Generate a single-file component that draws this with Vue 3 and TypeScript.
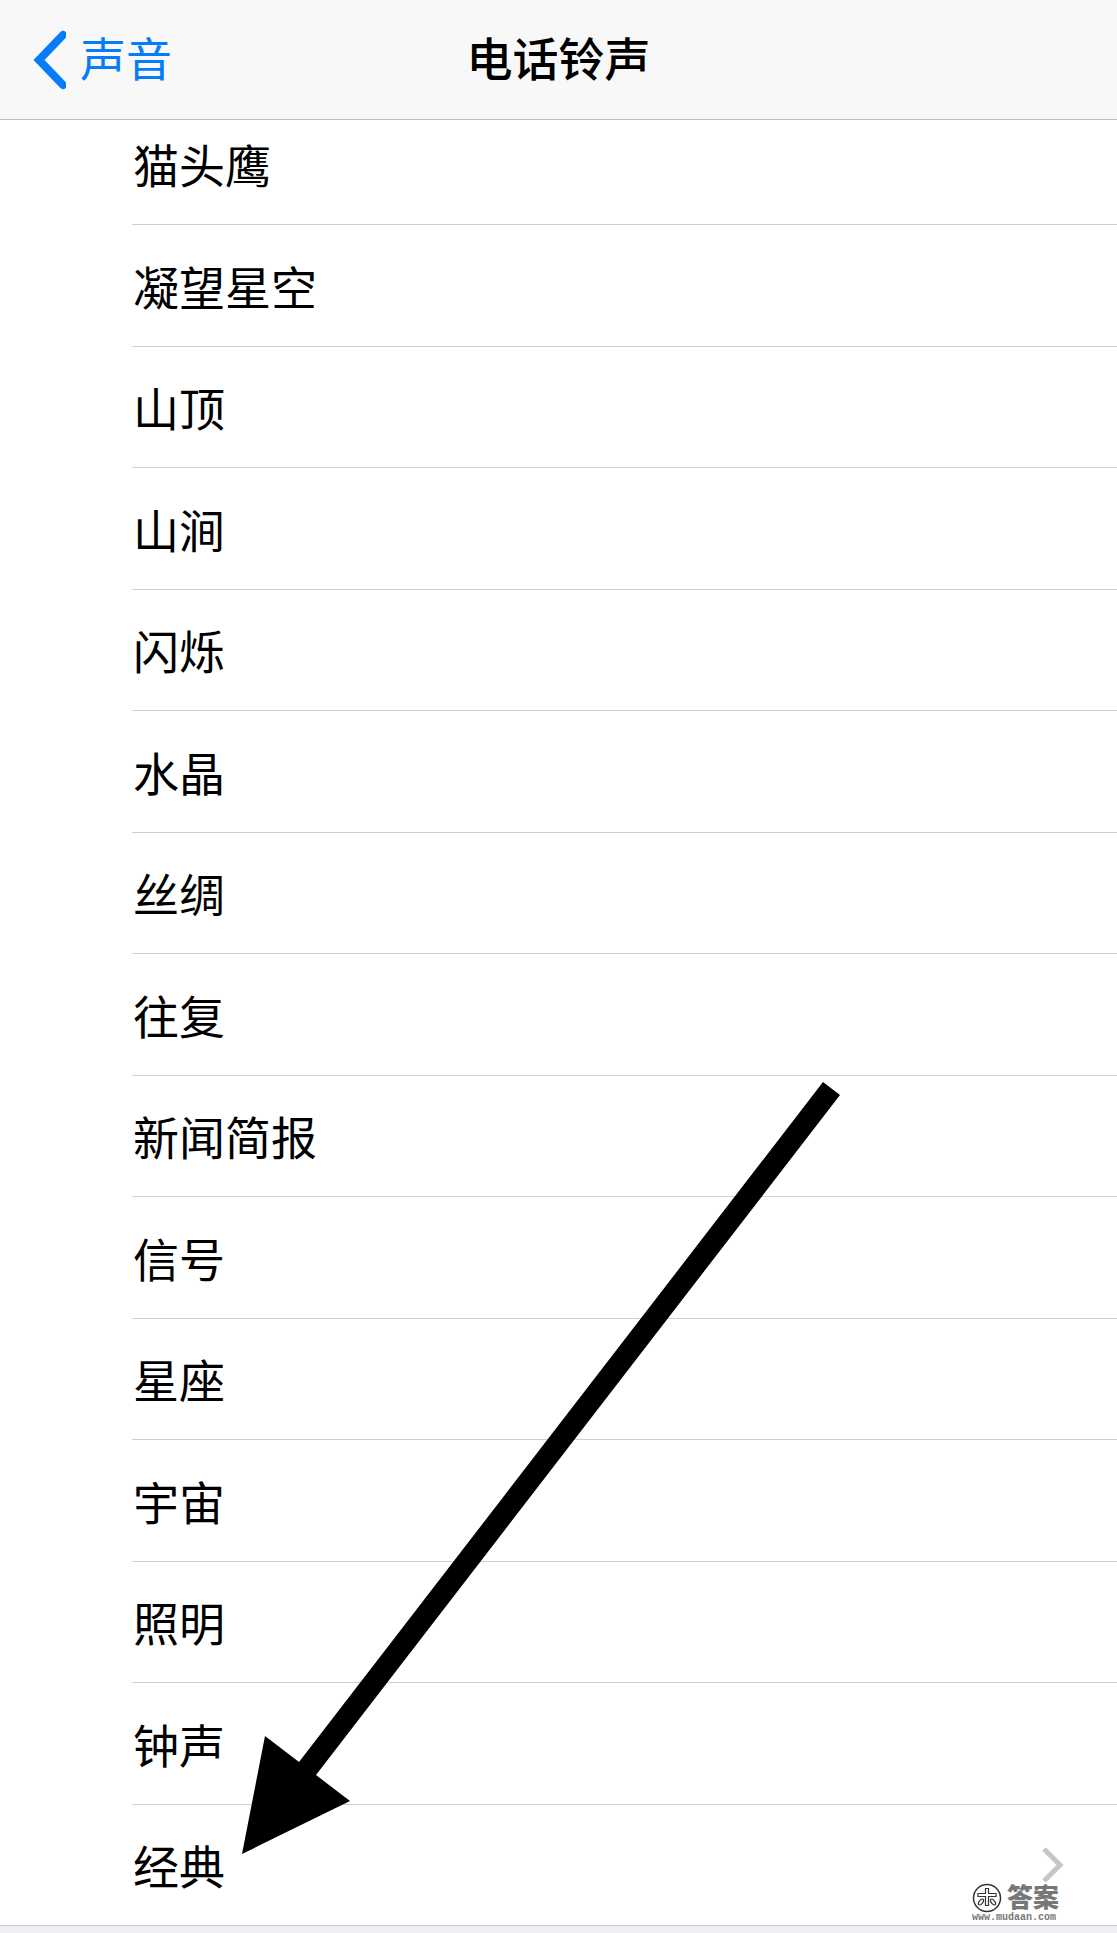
<script setup lang="ts">
interface Ringtone {
  name: string
  hasMore?: boolean
}

const ringtones: Ringtone[] = [
  { name: '猫头鹰' },
  { name: '凝望星空' },
  { name: '山顶' },
  { name: '山涧' },
  { name: '闪烁' },
  { name: '水晶' },
  { name: '丝绸' },
  { name: '往复' },
  { name: '新闻简报' },
  { name: '信号' },
  { name: '星座' },
  { name: '宇宙' },
  { name: '照明' },
  { name: '钟声' },
  { name: '经典', hasMore: true },
]
</script>

<template>
  <div class="screen">
    <header class="navbar">
      <a class="back" href="#sounds">
        <svg class="back-icon" width="34" height="64" viewBox="0 0 34 64" aria-hidden="true">
          <path d="M31 7 L7 32 L31 57" fill="none" stroke="#057cf9" stroke-width="8" stroke-linecap="round" />
        </svg>
        <span class="back-label">声音</span>
      </a>
      <h1 class="title">电话铃声</h1>
    </header>

    <main>
      <ul class="list">
        <li v-for="tone in ringtones" :key="tone.name" class="item">
          <button class="row" type="button">
            <span class="name">{{ tone.name }}</span>
            <svg v-if="tone.hasMore" class="more" width="24" height="40" viewBox="0 0 24 40" aria-hidden="true">
              <path d="M3 4 L19 20 L3 36" fill="none" stroke="#c6c6c8" stroke-width="5" />
            </svg>
          </button>
        </li>
      </ul>
    </main>

    <svg class="pointer" width="620" height="790" viewBox="230 1075 620 790" aria-hidden="true">
      <path d="M823 1082 L840 1095 L316 1775 L350 1801 L242 1854 L265 1736 L299 1762 Z" fill="#000" />
    </svg>

    <div class="watermark">
      <div class="brand">
        <svg width="30" height="30" viewBox="0 0 30 30" aria-hidden="true">
          <circle cx="15" cy="15" r="13.5" fill="#fff" stroke="#333" stroke-width="1.5" />
          <path d="M13.5 5.5h3v5h7.5v3h-7.5v9h-3v-9H6v-3h7.5z" fill="#fff" stroke="#333" stroke-width="1.2" />
          <ellipse cx="9" cy="19" rx="1.8" ry="3.4" transform="rotate(38 9 19)" fill="#fff" stroke="#333" stroke-width="1.2" />
          <ellipse cx="21" cy="19" rx="1.8" ry="3.4" transform="rotate(-38 21 19)" fill="#fff" stroke="#333" stroke-width="1.2" />
        </svg>
        <span class="brand-name">答案</span>
      </div>
      <div class="site">www.mudaan.com</div>
    </div>
  </div>
</template>

<style>
body {
  background: #efeff4;
}
</style>

<style scoped>
.screen {
  position: relative;
  padding-bottom: 7px;
  overflow: hidden;
  font-family: "Noto Sans CJK SC", sans-serif;
  font-size: 46px;
  color: #000;
}

.navbar {
  display: grid;
  grid-template-columns: 1fr auto 1fr;
  align-items: center;
  box-sizing: border-box;
  height: 120px;
  padding: 0 32px;
  background: #f8f8f8;
  border-bottom: 1px solid #bebebf;
}

.back {
  display: flex;
  align-items: center;
  gap: 14px;
  color: #057cf9;
  text-decoration: none;
}

.back-label,
.title {
  padding-bottom: 8px;
  line-height: 64px;
}

.title {
  margin: 0;
  font-size: 46px;
  font-weight: 500;
}

.list {
  margin: 0;
  padding: 0 0 0 132px;
  list-style: none;
  background: #fff;
  border-bottom: 1px solid #c8c8cc;
}

.item {
  box-sizing: border-box;
  height: 121px;
  border-bottom: 1px solid #cfcfd1;
}

.item:nth-child(even) {
  height: 122px;
}

.item:first-child {
  height: 105px;
}

.item:last-child {
  height: 120px;
  border-bottom: 0;
}

.row {
  display: flex;
  align-items: flex-end;
  justify-content: space-between;
  width: 100%;
  height: 100%;
  padding: 0 52px 0 1px;
  border: 0;
  background: transparent;
  color: inherit;
  font: inherit;
  text-align: left;
}

.name {
  line-height: 122px;
}

.more {
  align-self: center;
}

.pointer {
  position: absolute;
  left: 230px;
  top: 1075px;
  pointer-events: none;
}

.watermark {
  position: absolute;
  right: 58px;
  bottom: 10px;
  color: #777;
}

.brand {
  display: flex;
  align-items: center;
  gap: 5px;
  height: 30px;
}

.brand-name {
  padding-bottom: 4px;
  font-size: 26px;
  font-weight: 900;
  line-height: 26px;
}

.site {
  font-family: "Liberation Mono", monospace;
  font-size: 10px;
  font-weight: 700;
  line-height: 10px;
}
</style>
